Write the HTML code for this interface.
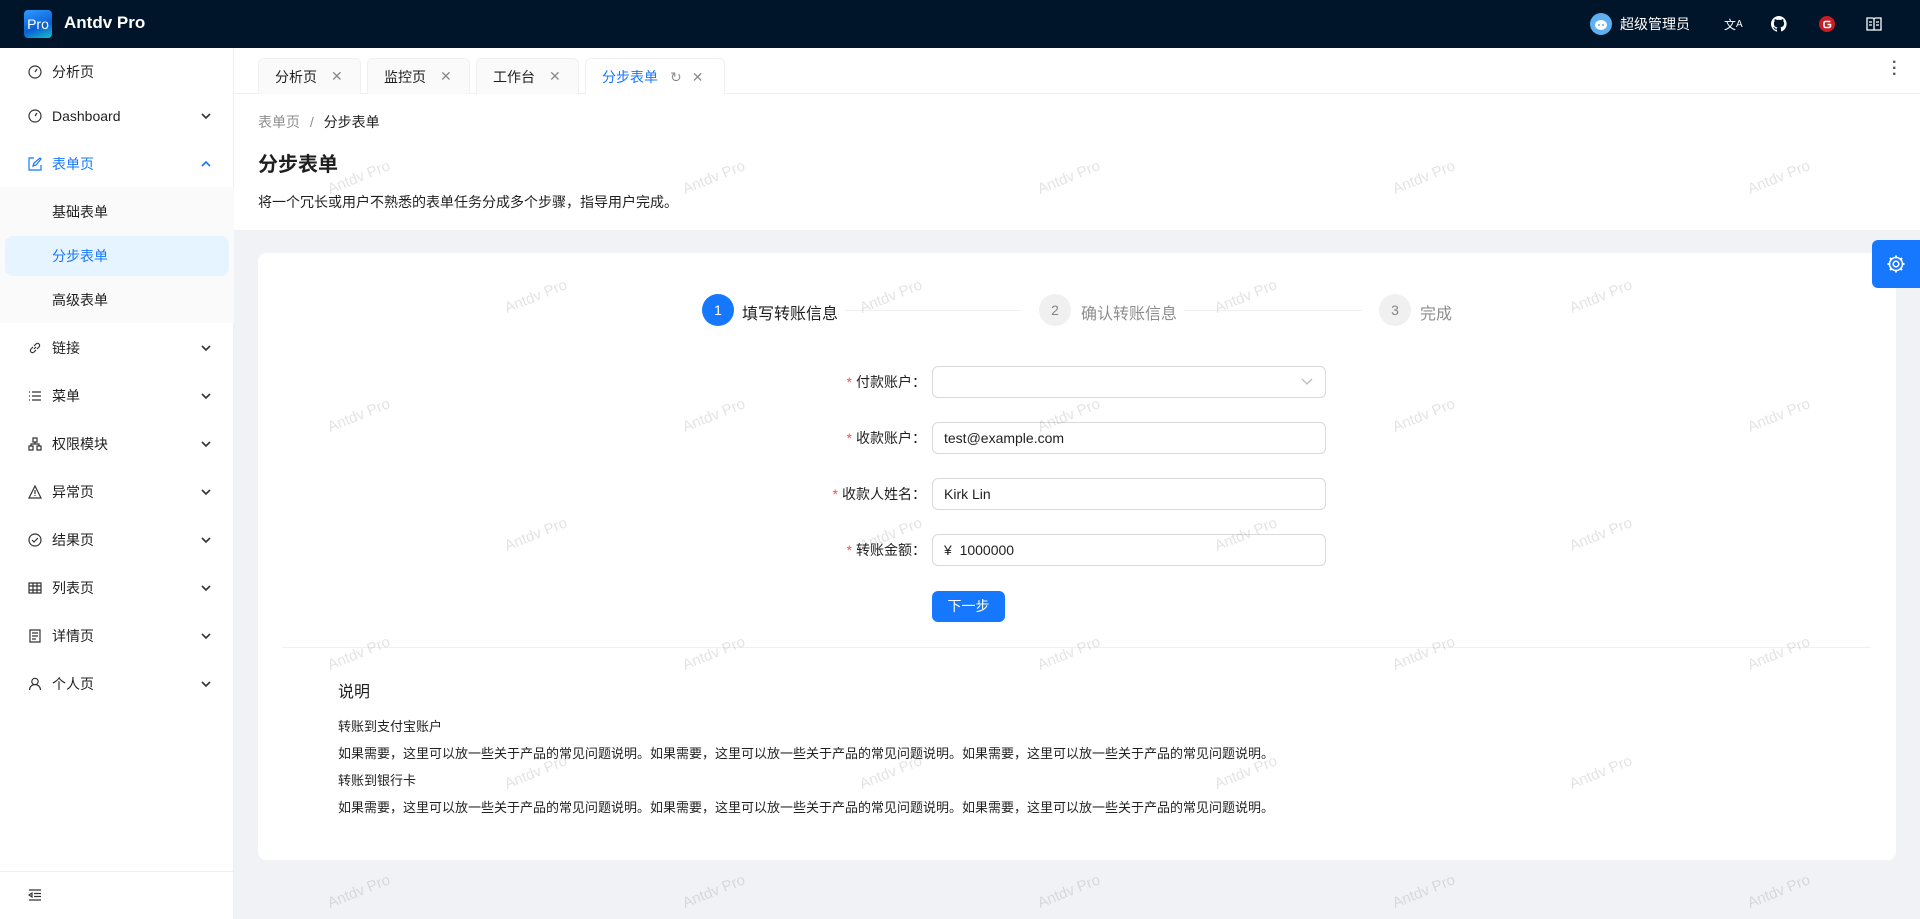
<!DOCTYPE html>
<html><head><meta charset="utf-8"><style>
*{box-sizing:border-box;margin:0;padding:0}
body{width:1920px;height:919px;overflow:hidden;font-family:"Liberation Sans","Noto Sans CJK SC",sans-serif;font-size:14px;color:rgba(0,0,0,.88);background:#f0f2f5;position:relative}
.hd{position:absolute;left:0;top:0;width:1920px;height:48px;background:#001529;color:#fff}
.logo{position:absolute;left:24px;top:10px;width:28px;height:28px;border-radius:4px;background:linear-gradient(160deg,#2f9bff,#0a5fd6 60%,#15c2c5);font-size:14px;line-height:28px;text-align:center;color:#fff}
.brand{position:absolute;left:64px;top:13px;font-size:17px;font-weight:bold}
.hr{position:absolute;top:0;height:48px;display:flex;align-items:center}
.sd{position:absolute;left:0;top:48px;width:234px;height:871px;background:#fff;border-right:1px solid #f0f0f0}
.mi{position:absolute;left:0;width:234px;height:40px;display:flex;align-items:center;padding-left:28px;font-size:14px}
.mi svg.i{width:14px;height:14px;margin-right:10px}
.mi .ar{position:absolute;right:22px;top:14px;width:12px;height:12px}
.sub{position:absolute;left:0;top:139px;width:234px;height:136px;background:#fafafa}
.tabs{position:absolute;left:234px;top:48px;width:1686px;height:46px;background:#fff;border-bottom:1px solid #f0f0f0}
.tab{position:absolute;top:10px;height:36px;border:1px solid #f0f0f0;border-bottom:none;border-radius:6px 6px 0 0;background:#fafafa;display:flex;align-items:center;padding-left:16px;font-size:14px}
.tab .x{margin-left:14px;color:rgba(0,0,0,.45);font-size:14px}
.ph{position:absolute;left:234px;top:94px;width:1686px;height:136px;background:#fff}
.card{position:absolute;left:258px;top:253px;width:1638px;height:607px;background:#fff;border-radius:8px}
.circ{position:absolute;width:32px;height:32px;border-radius:50%;text-align:center;line-height:32px;font-size:14px}
.lbl{position:absolute;width:300px;text-align:right;left:626px;font-size:14px}
.lbl b{color:#ff4d4f;font-weight:normal;margin-right:4px}
.inp{position:absolute;left:932px;width:394px;height:32px;border:1px solid #d9d9d9;border-radius:6px;padding-left:11px;line-height:30px;font-size:14px}
.wm{position:absolute;left:0;top:0;width:1920px;height:919px;pointer-events:none}
</style></head><body>
<div class="hd">
<div class="logo">Pro</div><div class="brand">Antdv Pro</div>
<div class="hr" style="left:1590px"><svg width="22" height="22" viewBox="0 0 22 22"><circle cx="11" cy="11" r="11" fill="#5fb0f0"/><ellipse cx="11" cy="12" rx="6" ry="5" fill="#fff"/><circle cx="9" cy="12" r="1" fill="#5fb0f0"/><circle cx="13" cy="12" r="1" fill="#5fb0f0"/></svg><span style="margin-left:8px;font-size:14px">超级管理员</span></div>
<div class="hr" style="left:1724px;font-size:12px">文<sub style="font-size:10px">A</sub></div>
<div class="hr" style="left:1771px"><svg width="16" height="16" viewBox="0 0 16 16"><path fill="#fff" d="M8 0a8 8 0 0 0-2.5 15.6c.4 0 .5-.2.5-.4v-1.5c-2.2.5-2.7-1-2.7-1-.4-.9-.9-1.2-.9-1.2-.7-.5.1-.5.1-.5.8.1 1.2.8 1.2.8.7 1.300 1.9.9 2.3.7.1-.5.3-.9.5-1.1-1.8-.2-3.6-.9-3.6-4 0-.9.3-1.6.8-2.1-.1-.2-.4-1 .1-2.1 0 0 .7-.2 2.2.8a7.5 7.5 0 0 1 4 0c1.5-1 2.2-.8 2.2-.8.4 1.1.2 1.9.1 2.1.5.6.8 1.3.8 2.1 0 3.1-1.9 3.7-3.6 3.9.3.3.5.8.5 1.5v2.2c0 .2.1.5.6.4A8 8 0 0 0 8 0z"/></svg></div>
<div class="hr" style="left:1819px"><svg width="16" height="16" viewBox="0 0 16 16"><circle cx="8" cy="8" r="8" fill="#c71d23"/><path d="M11.5 5.5h-5a1.5 1.5 0 0 0-1.5 1.5v3a1.5 1.5 0 0 0 1.5 1.5h3.5a1.5 1.5 0 0 0 1.5-1.5v-1.5h-3" stroke="#fff" stroke-width="1.6" fill="none"/></svg></div>
<div class="hr" style="left:1866px"><svg width="16" height="14" viewBox="0 0 16 14"><path d="M1 1h5.5a1.5 1.5 0 0 1 1.5 1.5V13H1zM15 1H9.5A1.5 1.5 0 0 0 8 2.5V13h7z" stroke="#fff" stroke-width="1.3" fill="none"/><path d="M3 5h3M3 8h3M10 5h3M10 8h3" stroke="#fff" stroke-width="1.2"/></svg></div>
</div>

<div class="sd">
<div class="sub"></div>
<div style="position:absolute;left:5px;top:188px;width:224px;height:40px;background:#e6f4ff;border-radius:8px"></div>
<div class="mi" style="top:4px"><svg class="i" viewBox="0 0 14 14"><circle cx="7" cy="7" r="6" stroke="#333" fill="none" stroke-width="1.2"/><path d="M7 7l2-3" stroke="#333" stroke-width="1.2"/></svg>分析页</div>
<div class="mi" style="top:48px"><svg class="i" viewBox="0 0 14 14"><circle cx="7" cy="7" r="6" stroke="#333" fill="none" stroke-width="1.2"/><path d="M7 7l2-3" stroke="#333" stroke-width="1.2"/></svg>Dashboard<svg class="ar" viewBox="0 0 12 12"><path d="M2 4l4 4 4-4" stroke="#333" stroke-width="1.6" fill="none"/></svg></div>
<div class="mi" style="top:96px;color:#1677ff"><svg class="i" viewBox="0 0 14 14"><path d="M6 1H1v12h12V8M5 9l1-3 6-5 1 1-5 6z" stroke="#1677ff" fill="none" stroke-width="1.2"/></svg>表单页<svg class="ar" viewBox="0 0 12 12"><path d="M2 8l4-4 4 4" stroke="#1677ff" stroke-width="1.6" fill="none"/></svg></div>
<div class="mi" style="top:144px;padding-left:52px">基础表单</div>
<div class="mi" style="top:188px;padding-left:52px;color:#1677ff">分步表单</div>
<div class="mi" style="top:232px;padding-left:52px">高级表单</div>
<div class="mi" style="top:280px"><svg class="i" viewBox="0 0 14 14"><path d="M6 8l2-2M5 6L3 8a2 2 0 0 0 3 3l2-2M9 8l2-2a2 2 0 0 0-3-3L6 5" stroke="#333" fill="none" stroke-width="1.2"/></svg>链接<svg class="ar" viewBox="0 0 12 12"><path d="M2 4l4 4 4-4" stroke="#333" stroke-width="1.6" fill="none"/></svg></div>
<div class="mi" style="top:328px"><svg class="i" viewBox="0 0 14 14"><path d="M1 3h1M1 7h1M1 11h1M4 3h9M4 7h9M4 11h9" stroke="#333" stroke-width="1.2"/></svg>菜单<svg class="ar" viewBox="0 0 12 12"><path d="M2 4l4 4 4-4" stroke="#333" stroke-width="1.6" fill="none"/></svg></div>
<div class="mi" style="top:376px"><svg class="i" viewBox="0 0 14 14"><path d="M5 1h4v4H5zM1 9h4v4H1zM9 9h4v4H9zM7 5v2M3 9V7h8v2" stroke="#333" fill="none" stroke-width="1.2"/></svg>权限模块<svg class="ar" viewBox="0 0 12 12"><path d="M2 4l4 4 4-4" stroke="#333" stroke-width="1.6" fill="none"/></svg></div>
<div class="mi" style="top:424px"><svg class="i" viewBox="0 0 14 14"><path d="M7 1l6 12H1zM7 5v4M7 10v1" stroke="#333" fill="none" stroke-width="1.2"/></svg>异常页<svg class="ar" viewBox="0 0 12 12"><path d="M2 4l4 4 4-4" stroke="#333" stroke-width="1.6" fill="none"/></svg></div>
<div class="mi" style="top:472px"><svg class="i" viewBox="0 0 14 14"><circle cx="7" cy="7" r="6" stroke="#333" fill="none" stroke-width="1.2"/><path d="M4 7l2 2 4-4" stroke="#333" fill="none" stroke-width="1.2"/></svg>结果页<svg class="ar" viewBox="0 0 12 12"><path d="M2 4l4 4 4-4" stroke="#333" stroke-width="1.6" fill="none"/></svg></div>
<div class="mi" style="top:520px"><svg class="i" viewBox="0 0 14 14"><path d="M1 2h12v10H1zM1 5h12M1 9h12M5 2v10M9 2v10" stroke="#333" fill="none" stroke-width="1.2"/></svg>列表页<svg class="ar" viewBox="0 0 12 12"><path d="M2 4l4 4 4-4" stroke="#333" stroke-width="1.6" fill="none"/></svg></div>
<div class="mi" style="top:568px"><svg class="i" viewBox="0 0 14 14"><path d="M2 1h10v12H2zM4 4h6M4 7h6M4 10h4" stroke="#333" fill="none" stroke-width="1.2"/></svg>详情页<svg class="ar" viewBox="0 0 12 12"><path d="M2 4l4 4 4-4" stroke="#333" stroke-width="1.6" fill="none"/></svg></div>
<div class="mi" style="top:616px"><svg class="i" viewBox="0 0 14 14"><circle cx="7" cy="4.5" r="3.2" stroke="#333" fill="none" stroke-width="1.2"/><path d="M1.5 13a5.5 5.5 0 0 1 11 0" stroke="#333" fill="none" stroke-width="1.2"/></svg>个人页<svg class="ar" viewBox="0 0 12 12"><path d="M2 4l4 4 4-4" stroke="#333" stroke-width="1.6" fill="none"/></svg></div>
<div style="position:absolute;left:0;top:823px;width:233px;border-top:1px solid #f0f0f0"></div>
<svg style="position:absolute;left:28px;top:841px" width="14" height="12" viewBox="0 0 14 12"><path d="M1 1h12M6 4.5h7M6 7.5h7M1 11h12M4 4L1 6l3 2z" stroke="#333" stroke-width="1.2" fill="none"/></svg>
</div>

<div class="tabs">
<div class="tab" style="left:24px;width:103px">分析页<span class="x">✕</span></div>
<div class="tab" style="left:133px;width:103px">监控页<span class="x">✕</span></div>
<div class="tab" style="left:242px;width:103px">工作台<span class="x">✕</span></div>
<div class="tab" style="left:351px;width:140px;background:#fff;color:#1677ff;height:37px">分步表单<span class="x" style="margin-left:12px">↻</span><span class="x" style="margin-left:10px">✕</span></div>
<div style="position:absolute;left:1658px;top:12px;font-size:16px;font-weight:bold;line-height:6px;color:#555">·<br>·<br>·</div>
</div>

<div class="ph">
<div style="position:absolute;left:24px;top:18px;font-size:14px;color:rgba(0,0,0,.45)">表单页 <span style="margin:0 6px">/</span> <span style="color:rgba(0,0,0,.88)">分步表单</span></div>
<div style="position:absolute;left:24px;top:54px;font-size:20px;font-weight:bold">分步表单</div>
<div style="position:absolute;left:24px;top:98px;font-size:14px">将一个冗长或用户不熟悉的表单任务分成多个步骤，指导用户完成。</div>
</div>

<div class="card">
<div class="circ" style="left:444px;top:41px;background:#1677ff;color:#fff">1</div>
<div style="position:absolute;left:484px;top:47px;font-size:16px">填写转账信息</div>
<div style="position:absolute;left:587px;top:57px;width:177px;height:1px;background:#f0f0f0"></div>
<div class="circ" style="left:781px;top:41px;background:#f0f0f0;color:rgba(0,0,0,.45)">2</div>
<div style="position:absolute;left:823px;top:47px;font-size:16px;color:rgba(0,0,0,.45)">确认转账信息</div>
<div style="position:absolute;left:926px;top:57px;width:178px;height:1px;background:#f0f0f0"></div>
<div class="circ" style="left:1121px;top:41px;background:#f0f0f0;color:rgba(0,0,0,.45)">3</div>
<div style="position:absolute;left:1162px;top:47px;font-size:16px;color:rgba(0,0,0,.45)">完成</div>
</div>

<div class="lbl" style="top:372px"><b>*</b>付款账户：</div>
<div class="inp" style="top:366px"><svg style="position:absolute;right:12px;top:11px" width="12" height="8" viewBox="0 0 12 8"><path d="M1 1l5 5 5-5" stroke="#bbb" stroke-width="1.3" fill="none"/></svg></div>
<div class="lbl" style="top:428px"><b>*</b>收款账户：</div>
<div class="inp" style="top:422px">test@example.com</div>
<div class="lbl" style="top:484px"><b>*</b>收款人姓名：</div>
<div class="inp" style="top:478px">Kirk Lin</div>
<div class="lbl" style="top:540px"><b>*</b>转账金额：</div>
<div class="inp" style="top:534px">¥&nbsp; 1000000</div>
<div style="position:absolute;left:932px;top:591px;width:73px;height:31px;background:#1677ff;border-radius:6px;color:#fff;text-align:center;line-height:31px;font-size:14px">下一步</div>
<div style="position:absolute;left:282px;top:647px;width:1589px;height:1px;background:#f0f0f0"></div>
<div style="position:absolute;left:338px;top:678px;font-size:16px">说明</div>
<div style="position:absolute;left:338px;top:717px;font-size:13px;line-height:20px">转账到支付宝账户<br><span style="display:block;margin-top:7px">如果需要，这里可以放一些关于产品的常见问题说明。如果需要，这里可以放一些关于产品的常见问题说明。如果需要，这里可以放一些关于产品的常见问题说明。</span><span style="display:block;margin-top:7px">转账到银行卡</span><span style="display:block;margin-top:7px">如果需要，这里可以放一些关于产品的常见问题说明。如果需要，这里可以放一些关于产品的常见问题说明。如果需要，这里可以放一些关于产品的常见问题说明。</span></div>

<svg class="wm" width="1920" height="919"><defs><pattern id="p" x="177" y="75" width="355" height="238" patternUnits="userSpaceOnUse"><g font-size="15" fill="rgba(0,0,0,0.11)" font-family="Liberation Sans"><text x="330" y="0" transform="rotate(-22 330 0)">Antdv Pro</text><text x="-25" y="0" transform="rotate(-22 -25 0)">Antdv Pro</text><text x="330" y="238" transform="rotate(-22 330 238)">Antdv Pro</text><text x="-25" y="238" transform="rotate(-22 -25 238)">Antdv Pro</text><text x="153" y="119" transform="rotate(-22 153 119)">Antdv Pro</text></g></pattern></defs><rect x="234" y="140" width="1686" height="779" fill="url(#p)"/></svg>

<div style="position:absolute;z-index:10;left:1872px;top:240px;width:48px;height:48px;background:#1677ff;border-radius:6px 0 0 6px;display:flex;align-items:center;justify-content:center"><svg width="20" height="20" viewBox="0 0 20 20"><circle cx="10" cy="10" r="2.8" stroke="#fff" stroke-width="1.6" fill="none"/><circle cx="10" cy="10" r="6.5" stroke="#fff" stroke-width="1.6" fill="none"/><path d="M10 1.5v2.5M10 16v2.5M1.5 10h2.5M16 10h2.5M4 4l1.8 1.8M14.2 14.2L16 16M4 16l1.8-1.8M14.2 5.8L16 4" stroke="#fff" stroke-width="2"/></svg></div>
</body></html>
